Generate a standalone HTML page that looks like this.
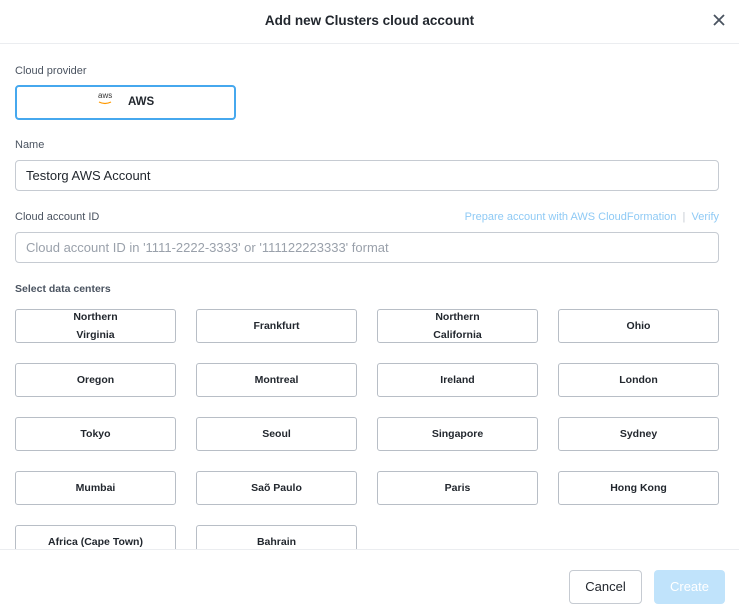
<!DOCTYPE html>
<html><head><meta charset="utf-8"><style>
*{box-sizing:border-box;margin:0;padding:0}
body{width:739px;height:612px;background:#fff;font-family:"Liberation Sans",sans-serif;color:#22272e;position:relative;overflow:hidden}
.hdr{position:absolute;left:0;top:0;width:739px;height:44px;border-bottom:1px solid #ebedf0;text-align:center;font-size:13.5px;font-weight:bold;line-height:41px;color:#22272e}
.x{position:absolute;right:14px;top:14px;width:12px;height:12px}
.lbl{position:absolute;left:15px;font-size:11px;color:#4a5360}
.inp{position:absolute;left:15px;width:704px;height:31px;border:1px solid #c6cbd2;border-radius:4px;font-size:13px;line-height:29px;padding-left:10px}
.aws{position:absolute;left:15px;top:85px;width:221px;height:35px;border:2px solid #46a8ee;border-radius:4px;font-size:11.5px;font-weight:bold;line-height:31px}
.dc{position:absolute;width:161px;height:34px;border:1px solid #b8bec6;border-radius:3px;font-size:10.5px;font-weight:bold;text-align:center;display:flex;align-items:center;justify-content:center;line-height:18px}
.clip{position:absolute;left:0;top:300px;width:739px;height:249px;overflow:hidden}
.ftr{position:absolute;left:0;top:549px;width:739px;height:63px;border-top:1px solid #ebedf0;background:#fff}
.btn{position:absolute;top:20px;height:34px;border-radius:4px;font-size:13px;text-align:center;line-height:32px}
</style></head><body>
<div class="hdr">Add new Clusters cloud account<svg class="x" viewBox="0 0 12 12"><path d="M1 1L11 11M11 1L1 11" stroke="#4a5360" stroke-width="1.8"/></svg></div>
<div class="lbl" style="top:65px">Cloud provider</div>
<div class="aws"><span style="position:absolute;left:81px;top:5px;font-size:8px;line-height:8px;font-weight:normal;color:#333">aws</span><svg style="position:absolute;left:81px;top:14px" width="14" height="4" viewBox="0 0 14 4"><path d="M1 1Q7 4 13 1" stroke="#f90" stroke-width="1.2" fill="none"/></svg><span style="position:absolute;left:111px">AWS</span></div>
<div class="lbl" style="top:139px">Name</div>
<div class="inp" style="top:160px">Testorg AWS Account</div>
<div class="lbl" style="top:211px">Cloud account ID</div>
<div style="position:absolute;right:20px;top:211px;font-size:11px;color:#8fcaf5">Prepare account with AWS CloudFormation &nbsp;<span style="color:#c6cbd2">|</span>&nbsp; Verify</div>
<div class="inp" style="top:232px;color:#9aa1ab">Cloud account ID in '1111-2222-3333' or '111122223333' format</div>
<div class="lbl" style="top:283px;font-weight:bold;font-size:10.5px;color:#4a5360">Select data centers</div>
<div class="clip">
<div class="dc" style="left:15px;top:9px">Northern<br>Virginia</div>
<div class="dc" style="left:196px;top:9px">Frankfurt</div>
<div class="dc" style="left:377px;top:9px">Northern<br>California</div>
<div class="dc" style="left:558px;top:9px">Ohio</div>
<div class="dc" style="left:15px;top:63px">Oregon</div>
<div class="dc" style="left:196px;top:63px">Montreal</div>
<div class="dc" style="left:377px;top:63px">Ireland</div>
<div class="dc" style="left:558px;top:63px">London</div>
<div class="dc" style="left:15px;top:117px">Tokyo</div>
<div class="dc" style="left:196px;top:117px">Seoul</div>
<div class="dc" style="left:377px;top:117px">Singapore</div>
<div class="dc" style="left:558px;top:117px">Sydney</div>
<div class="dc" style="left:15px;top:171px">Mumbai</div>
<div class="dc" style="left:196px;top:171px">Saõ Paulo</div>
<div class="dc" style="left:377px;top:171px">Paris</div>
<div class="dc" style="left:558px;top:171px">Hong Kong</div>
<div class="dc" style="left:15px;top:225px">Africa (Cape Town)</div>
<div class="dc" style="left:196px;top:225px">Bahrain</div>
</div>
<div class="ftr">
<div class="btn" style="left:569px;width:73px;border:1px solid #c6cbd2;color:#22272e">Cancel</div>
<div class="btn" style="left:654px;width:71px;background:#c0e3fb;color:#fff;line-height:34px">Create</div>
</div>
</body></html>
